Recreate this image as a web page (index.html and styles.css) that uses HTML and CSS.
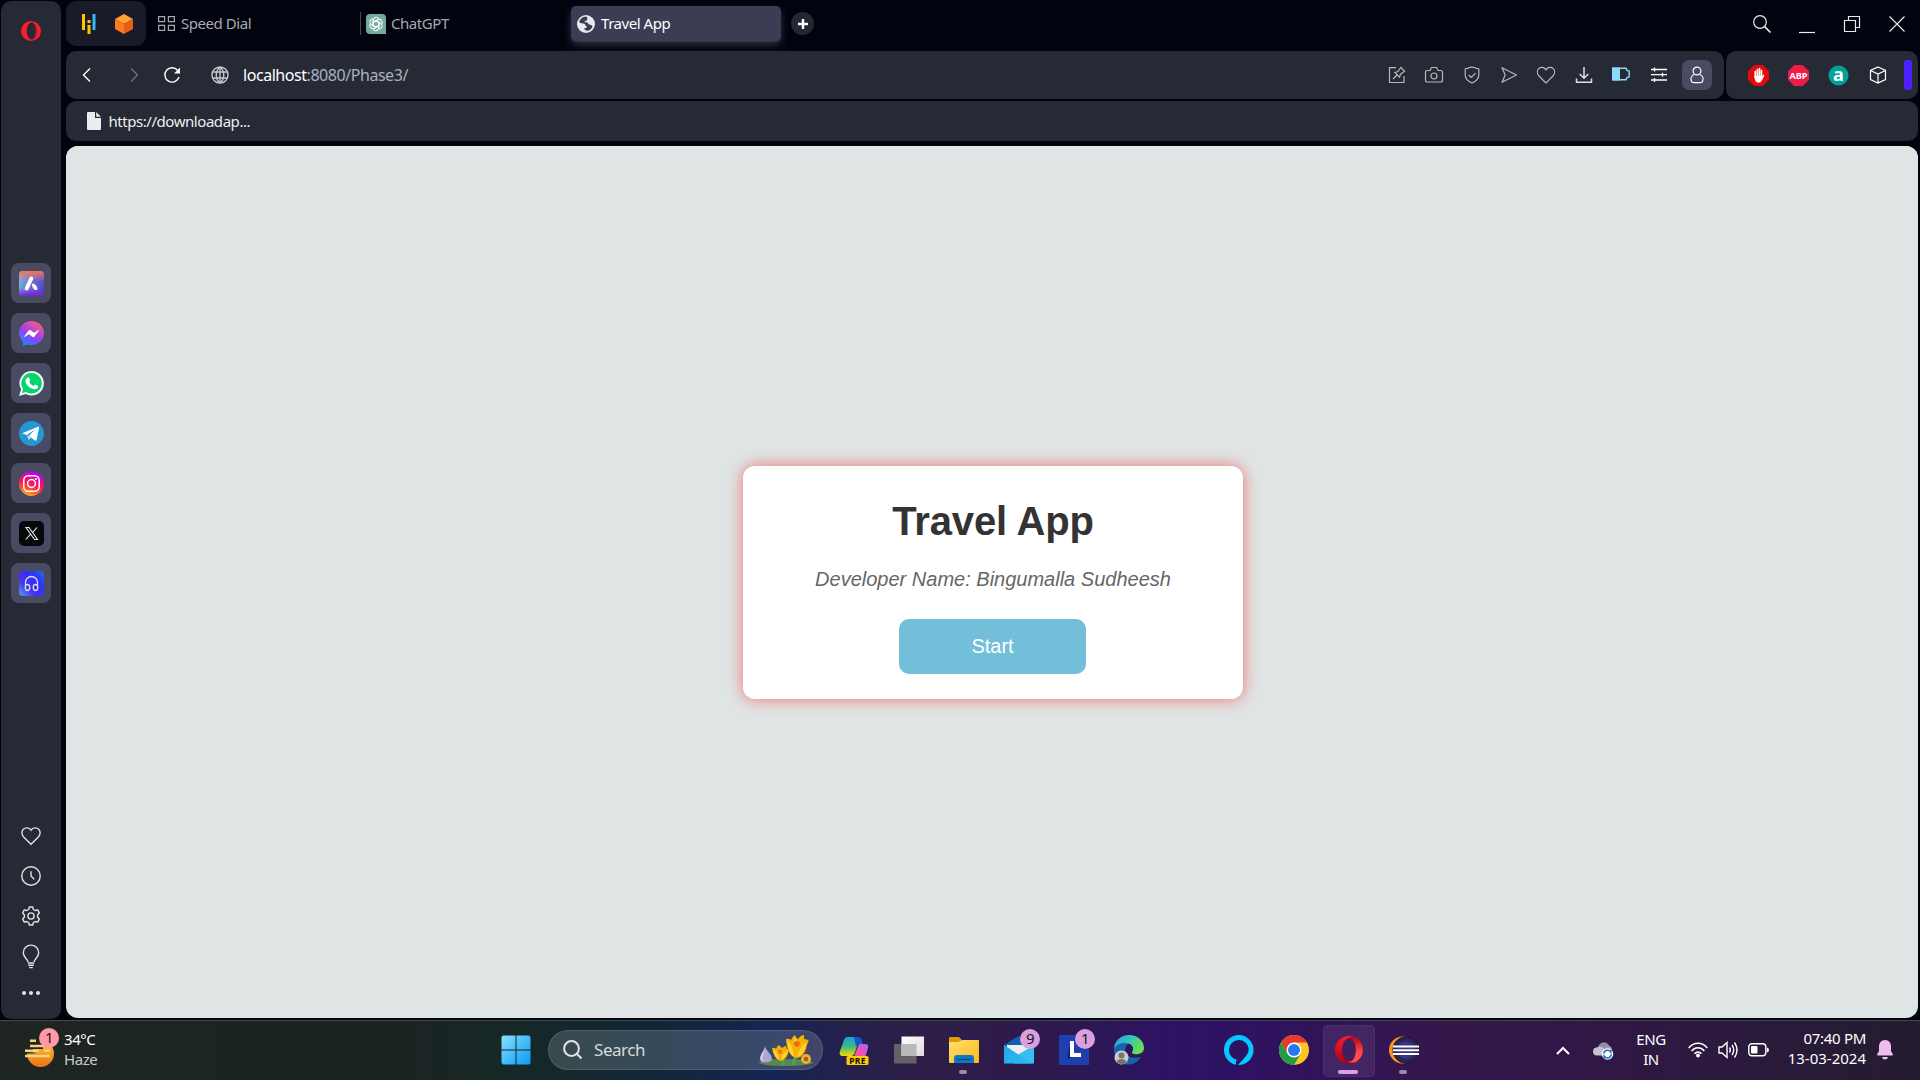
FILE: index.html
```html
<!DOCTYPE html>
<html lang="en">
<head>
<meta charset="utf-8">
<title>Travel App</title>
<link rel="stylesheet" href="styles.css">
</head>
<body>
<div class="browser">
  <nav class="sidebar">
    <svg class="opera-logo" viewBox="0 0 20 20"><path fill="#ff1b2d" fill-rule="evenodd" d="M10 0a10 10 0 1 0 0 20a10 10 0 1 0 0-20zM10.500 1.500c2.800 0 4.300 3.700 4.300 8.500s-1.500 8.500-4.300 8.500S5.700 14.800 5.700 10S7.700 1.500 10.500 1.500z"/><path fill="none" stroke="#8e1a28" stroke-width=".8" d="M11.500 1.300c3 1.700 4.200 5 4.200 8.700s-1.200 7-4.200 8.700"/></svg>
    <div class="apps">
      <span class="app"><svg viewBox="0 0 25 25"><defs><linearGradient id="ar" x1="0" y1="0.300" x2="1" y2="0.700"><stop offset="0" stop-color="#62c8dd"/><stop offset=".4" stop-color="#7771d8"/><stop offset="1" stop-color="#4d49c4"/></linearGradient><linearGradient id="ar2" x1=".4" y1="0" x2=".4" y2="1"><stop offset="0" stop-color="#f5774a"/><stop offset=".45" stop-color="#d8688a" stop-opacity="0"/><stop offset=".7" stop-color="#7624d0" stop-opacity="0"/><stop offset="1" stop-color="#7624d0"/></linearGradient></defs><rect width="25" height="25" rx="4" fill="url(#ar)"/><rect width="25" height="25" rx="4" fill="url(#ar2)"/><path d="M12.300 7.500L7.700 17.500" stroke="#fff" stroke-width="4" stroke-linecap="round"/><path d="M13.500 13c2.500 0 4.500 2.500 4.500 5.500-3 .5-4.500-2-4.500-5.500z" fill="#fff" stroke="#fff"/></svg></span>
      <span class="app"><svg viewBox="0 0 25 25"><defs><linearGradient id="ms" x1=".2" y1="1" x2=".8" y2="0"><stop offset="0" stop-color="#168bff"/><stop offset=".45" stop-color="#9a3df5"/><stop offset="1" stop-color="#ff5f78"/></linearGradient></defs><path fill="url(#ms)" d="M12.500 0C5.500 0 0 5.100 0 12c0 3.600 1.500 6.400 4 8.500V25l4-1.600c1.400.4 2.900.6 4.500.6C19.500 24 25 18.900 25 12S19.500 0 12.500 0z"/><path fill="#fff" d="M4.500 16.500l5-7q1-1 2.200-.2l3.300 2.500 5.500-3.300-5 7q-1 1.200-2.200.3l-3.300-2.500z"/></svg></span>
      <span class="app"><svg viewBox="0 0 25 25"><path fill="#f3f6f6" d="M12.700 0a12.300 12.300 0 0 0-10.600 18.500L0 25l6.700-1.900A12.300 12.300 0 1 0 12.700 0z"/><path fill="#05d36c" d="M12.700 2.100A10.200 10.200 0 0 0 4.100 18l-1.200 4 4.200-1.100A10.200 10.200 0 1 0 12.700 2.100z"/><path fill="#fff" d="M8.500 6.500c.9-.5 1.400-.2 1.700.4l1 2.200c.2.600-.9 1.600-1 1.900.9 1.900 2.300 3.100 4.300 3.900.5 0 1.300-1.600 1.900-1.400l2.400 1.200c.7.400.2 1.900-.4 2.600-1.400 1.300-3.200 1.300-5.700.3-2.900-1.200-5.300-4-6.100-6.400-.5-1.800.2-3.600 1.900-4.700z"/></svg></span>
      <span class="app"><svg viewBox="0 0 25 25"><circle cx="12.500" cy="12.500" r="12.500" fill="#2497d4"/><path fill="#fff" d="M3.200 12.200L19 5.800c.8-.2 1.200.2 1 1.200l-2.500 12c-.2.900-.8 1-1.500.6l-7-5.200z"/><path fill="#2497d4" d="M8 14l8.500-6L10 14.700l-.8 4.500z"/><path fill="#d5e7f2" d="M8.200 14.200l1.300 4.800 2.500-2.500z"/></svg></span>
      <span class="app"><svg viewBox="0 0 25 25"><defs><linearGradient id="ig" x1=".25" y1="1" x2=".6" y2="0"><stop offset="0" stop-color="#ffc42e"/><stop offset=".25" stop-color="#ff5a24"/><stop offset=".5" stop-color="#ff125f"/><stop offset="1" stop-color="#b500fa"/></linearGradient></defs><circle cx="12.500" cy="12.500" r="12.500" fill="url(#ig)"/><rect x="4.800" y="4.800" width="15.400" height="15.400" rx="4.500" fill="none" stroke="#fff" stroke-width="1.500"/><circle cx="12.500" cy="12.500" r="3.900" fill="none" stroke="#fff" stroke-width="1.500"/><circle cx="17" cy="8" r="1" fill="#fff"/></svg></span>
      <span class="app"><svg viewBox="0 0 25 25"><rect width="25" height="25" rx="5" fill="#07080a"/><path fill="none" stroke="#e8e8e8" stroke-width="1.100" d="M7 6.500h3l8.500 12h-3zM18 6.500l-4.800 5.300M11.600 13.200L6.800 18.500"/></svg></span>
      <span class="app"><svg viewBox="0 0 25 25"><defs><linearGradient id="hp" x1="0" y1="1" x2="1" y2="0"><stop offset="0" stop-color="#50a7ef"/><stop offset=".35" stop-color="#4530f0"/><stop offset=".7" stop-color="#3034f0"/><stop offset="1" stop-color="#1b6ef4"/></linearGradient></defs><rect width="25" height="25" rx="4" fill="url(#hp)"/><path fill="none" stroke="#d7dcf5" stroke-width="1.300" d="M6.500 15v-3.500a6 6 0 0 1 12 0V15M8.500 13.500c3 0 3 6 0 6s-3-6 0-6zM16.500 13.500c3 0 3 6 0 6s-3-6 0-6z"/></svg></span>
    </div>
    <div class="side-tools line">
      <svg viewBox="0 0 20 20"><path d="M10 18.300L2.600 11C.2 8.400.6 5 2.300 3.300c2.200-2.200 5.900-1.900 7.700.9 1.800-2.800 5.500-3.100 7.700-.9 1.700 1.700 2.100 5.100-.3 7.700z"/></svg>
      <svg viewBox="0 0 20 20"><circle cx="10" cy="10" r="9.200"/><path d="M10 5.300V10l3.200 3.300"/></svg>
      <svg viewBox="0 0 20 20"><path d="M8.300 1h3.400l.7 2.500 1.800 1 2.500-.7 1.700 3L16.600 9v2l1.800 2.200-1.700 3-2.500-.7-1.800 1-.7 2.500H8.300l-.7-2.500-1.800-1-2.500.7-1.700-3L3.400 11V9L1.600 6.800l1.700-3 2.500.7 1.800-1z" stroke-linejoin="round"/><circle cx="10" cy="10" r="3.100"/></svg>
      <svg class="bulb" viewBox="0 0 20 24"><path d="M7 17c0-3-4.700-4-4.700-9.200a7.700 7.700 0 0 1 15.400 0C17.700 13 13 14 13 17M6.700 18h6.600M7.200 20.300h5.600M8.200 22.600h3.600"/></svg>
      <svg viewBox="0 0 20 20"><path d="M3 10h.01M10 10h.01M17 10h.01" stroke-width="4" stroke-linecap="round"/></svg>
    </div>
  </nav>

  <div class="window">
    <header class="tabs">
      <div class="pinned">
        <svg width="16" height="20" viewBox="0 0 16 20"><path stroke="#ffc400" stroke-width="3" d="M2.500 0v16M8 11v9M8 6v3"/><path stroke="#39b5f7" stroke-width="3" d="M13 0v16"/></svg>
        <svg width="18" height="20" viewBox="0 0 18 20"><path fill="#ffa135" d="M9 0l9 5-9 5-9-5z"/><path fill="#fa7a20" d="M0 5l9 5v10l-9-5z"/><path fill="#ea5d16" d="M18 5l-9 5v10l9-5z"/></svg>
      </div>
      <div class="tab speed">
        <svg class="line" width="17" height="15" viewBox="0 0 17 15"><path stroke="#a8a9af" d="M.6.6h6v5h-6zM10.400.6h6v5h-6zM.6 9.400h6v5h-6zM10.400 9.400h6v5h-6z"/></svg>
        <span>Speed Dial</span>
      </div>
      <div class="tab chat">
        <svg width="20" height="20" viewBox="0 0 20 20"><path d="M4 0h12a4 4 0 0 1 4 4v16H4a4 4 0 0 1-4-4V4a4 4 0 0 1 4-4z" fill="#74aa9c"/><g fill="none" stroke="#eef7f4" stroke-width="1.100"><path id="petal" d="M7.300 11.500V6.200a3 3 0 0 1 5.600-1.400M7.300 8.400l3-1.700 4.400 2.500"/><use href="#petal" transform="rotate(60 10 10)"/><use href="#petal" transform="rotate(120 10 10)"/><use href="#petal" transform="rotate(180 10 10)"/><use href="#petal" transform="rotate(240 10 10)"/><use href="#petal" transform="rotate(300 10 10)"/></g></svg>
        <span>ChatGPT</span>
      </div>
      <div class="tab active">
        <svg width="18" height="18" viewBox="0 0 18 18"><circle cx="9" cy="9" r="9" fill="#e6e9ed"/><path fill="#3a3d54" d="M10 2C6.500 1.300 3 3.500 2.300 7c1.200 1.800 3.700 1.200 5 1.800 1.400.7.700 2 2 2.500 1.500.5.700 1.700-2.300 2.200.5 1.200 2 2.500 4 2.200 2-.4 3.800-2 4.500-4.200-.8-1.400-2-2-3.800-2-.2-1.700-2-2.200-4-2.200-.6-1.300 1-1.500 2-1.500C10 4.300 11 3.500 10 2z"/></svg>
        <span>Travel App</span>
      </div>
      <span class="new-tab"><svg width="10" height="10" viewBox="0 0 10 10"><path stroke="#fff" stroke-width="2.400" d="M5 0v10M0 5h10"/></svg></span>
      <div class="controls line">
        <svg viewBox="0 0 18 18"><circle cx="7" cy="7" r="6.300"/><path stroke-width="1.700" d="M11.500 11.500l6 6"/></svg>
        <svg viewBox="0 0 18 18"><path d="M1 17.500h16"/></svg>
        <svg viewBox="0 0 18 18"><path d="M1.500 5.500h11v11h-11zM5.500 5V1.500h11v11H13"/></svg>
        <svg viewBox="0 0 18 18"><path d="M1.500 1.500l15 15M16.500 1.500l-15 15"/></svg>
      </div>
    </header>

    <div class="toolbar">
      <div class="address panel">
        <div class="nav-icons line">
          <svg viewBox="0 0 18 18"><path stroke="#fff" d="M12 2.500L5.500 9l6.500 6.500"/></svg>
          <svg viewBox="0 0 18 18"><path stroke="#6d707a" d="M6 2.500L12.500 9 6 15.500"/></svg>
          <svg class="reload" viewBox="0 0 18 18"><path stroke="#fff" d="M15 4.800A7.200 7.200 0 1 0 16 11"/><path fill="#fff" stroke="none" d="M17 1.500v6h-6z"/></svg>
          <svg class="globe" viewBox="0 0 18 18"><path stroke="#c4c6cc" d="M9 1a8 8 0 1 0 0 16A8 8 0 1 0 9 1zM9 1c-5 4-5 12 0 16M9 1c5 4 5 12 0 16M2 6h14M2 12h14M9 1v16"/></svg>
        </div>
        <span class="url"><b>localhost</b>:8080/Phase3/</span>
        <div class="page-tools line">
          <svg viewBox="0 0 18 18"><path d="M8 1.700H1.500v14.800H16V10M5 13l4-4M7 6.500l4.500 4.700 1-3 4-3-3.600-3.700-3 4z"/></svg>
          <svg viewBox="0 0 18 18"><path d="M5 4.500l1.500-3h5l1.500 3h2.500q2 0 2 2V14q0 2-2 2h-13q-2 0-2-2V6.500q0-2 2-2z"/><circle cx="9" cy="10" r="3"/></svg>
          <svg viewBox="0 0 18 18"><path d="M9 1l6.800 2v6c0 4-3 6.300-6.800 8C5.200 15.300 2.200 13 2.200 9V3zM5.600 8.800L8.300 11.500l4.300-4.400"/></svg>
          <svg viewBox="0 0 18 18"><path stroke-linejoin="round" d="M2 1.700L16.500 9 2 16.300 5.200 9z"/></svg>
          <svg viewBox="0 0 18 18"><path d="M9 17L2 10C-.5 7.200.2 4.200 1.700 2.700 3.700.7 7.300.9 9 3.900c1.700-3 5.300-3.200 7.300-1.200C17.800 4.200 18.500 7.200 16 10z"/></svg>
          <svg class="bright" viewBox="0 0 18 18"><path stroke-width="1.500" d="M9 1v11M4.700 8L9 12.300 13.300 8M1.500 12.500v3.700h15v-3.700"/></svg>
          <svg viewBox="0 0 18 18"><path fill="#8edaff" stroke="none" d="M0 1.500h8v13H1q-1 0-1-1z"/><path stroke="#8edaff" stroke-width="1.400" d="M1 2.200h13l1 2.200 2.200.8v5.600l-2.200.8-1 2.200H1z"/></svg>
          <svg class="bright" viewBox="0 0 18 18"><path stroke="#fff" stroke-width="1.300" d="M1 3.500h16M1 8.700h16M1 14h16M4.500 1.500v4M12.500 6.700v4M4.500 12v4"/></svg>
          <span class="profile"><svg viewBox="0 0 18 18"><circle cx="9" cy="5" r="3.900" stroke="#fff"/><path stroke="#fff" d="M6 8.500C3 10 2.500 13 3.300 15q.6 1.700 2.500 1.700h6.400q1.900 0 2.500-1.700c.8-2 .3-5-2.700-6.500"/></svg></span>
        </div>
      </div>
      <div class="extensions panel">
        <span><svg width="21" height="21" viewBox="0 0 21 21"><path fill="#e60a0a" d="M6.200 0h8.600L21 6.200v8.600L14.800 21H6.200L0 14.800V6.200z"/><path stroke="#fff" stroke-width="1.700" stroke-linecap="round" d="M7.300 6.500v6M9.400 4.500v7M11.500 3.700v7M13.500 5.500V12"/><path fill="#fff" d="M6.500 11h7.700l1.400-1.500c.8.200.8.900.5 1.500l-2.200 4.500-1.600 2H9c-2-1.500-2.500-3-2.500-6.500z"/></svg></span>
        <span><svg width="21" height="21" viewBox="0 0 21 21"><path fill="#ed1e45" d="M6.200 0h8.600L21 6.200v8.600L14.800 21H6.200L0 14.800V6.200z"/><text class="abp" x="10.500" y="14" text-anchor="middle" textLength="18" lengthAdjust="spacingAndGlyphs">ABP</text></svg></span>
        <span><svg width="21" height="21" viewBox="0 0 21 21"><circle cx="10.500" cy="10.500" r="10" fill="#00a497"/><text class="letter-a" x="10.500" y="16" text-anchor="middle">a</text></svg></span>
        <span class="line"><svg width="18" height="18" viewBox="0 0 18 18"><path stroke="#fff" d="M9 1l7.500 3.500v9L9 17l-7.500-3.500v-9zM1.500 4.500L9 8l7.500-3.500M9 8v9"/></svg></span>
        <i class="accent"></i>
      </div>
    </div>

    <div class="bookmarks panel">
      <svg width="14" height="18" viewBox="0 0 14 18"><path fill="#e9edf2" d="M1 0h7v6h6v11q0 1-1 1H1q-1 0-1-1V1q0-1 1-1zM9.200 0L14 4.800H9.200z"/></svg>
      <span>https://downloadap...</span>
    </div>

    <main class="page">
      <section class="card">
        <h1>Travel App</h1>
        <p>Developer Name: Bingumalla Sudheesh</p>
        <button>Start</button>
      </section>
    </main>
  </div>
</div>

<footer class="taskbar">
  <div class="weather">
    <div class="haze">
      <svg width="30" height="32" viewBox="0 0 30 32"><defs><linearGradient id="sun" x1="0" y1="0" x2="0" y2="1"><stop offset="0" stop-color="#ffc72e"/><stop offset="1" stop-color="#f0701a"/></linearGradient></defs><path fill="url(#sun)" d="M2 14.500a13.500 13.500 0 0 0 27 0C29 8 24 2 18 1v9H8v4.500z"/><path stroke="#f3d27b" stroke-width="2.600" d="M5 1.800h6M5 7h15M0 11.800h14M19 11.800h6M0 17h25"/><path stroke="#8a7433" stroke-width="1.500" d="M4 14.300h7"/></svg>
      <span class="badge alert">1</span>
    </div>
    <div class="lines"><span>34°C</span><span class="dim">Haze</span></div>
  </div>

  <div class="dock">
    <span class="slot"><svg width="30" height="30" viewBox="0 0 30 30"><defs><linearGradient id="win" x1="0" y1="0" x2="1" y2="1"><stop offset="0" stop-color="#8be1ff"/><stop offset=".5" stop-color="#44bdf9"/><stop offset="1" stop-color="#0b9bf8"/></linearGradient></defs><path fill="url(#win)" d="M2 .5h12.500v14H.5V2zM15.500.5H28l1.500 1.500v12.500h-14zM.5 15.500h14v14H2L.5 28zM15.500 15.500h14V28L28 29.500H15.500z"/></svg></span>
    <div class="search">
      <svg width="20" height="20" viewBox="0 0 20 20" fill="none" stroke="#e1e5e6" stroke-width="2"><circle cx="8.500" cy="8.500" r="7.400"/><path d="M13.500 13.500l5 5"/></svg>
      <span>Search</span>
      <svg class="flowers" width="56" height="32" viewBox="0 0 56 32"><ellipse cx="28" cy="28.500" rx="27" ry="3.500" fill="#5a8651"/><path stroke="#43a55c" stroke-width="3" fill="none" d="M39 20q-3 6-4 11M22 22q4 4 3 9"/><path fill="#b0a6ce" d="M7 12c1 5 7 8 7 13 0 4-12 5-12 0 0-4 4-8 5-13z"/><path fill="#dcd5ea" d="M7 15c-1 4-4 8-2 13-4-2-3-7 2-13z"/><path fill="#f5b000" d="M28 5q3-1 5 1 1-3 4-5 1 3 3 4 3-4 6-4v4q3 0 5 2-2 2-3 8-3 9-10 9-7-2-9-12-1-4-1-7z"/><path fill="#ffd02f" d="M29 6q6 4 7 17-5-3-6-10zM49 8q-7 3-10 15 6-2 8-9zM37 3q3 4 0 10-2-5 0-10z"/><path fill="#ee6719" d="M36 8l3-1 3 1-1 4-3 1-2-2z"/><path fill="#f5b000" d="M14 14q3-1 4 1 1-3 3-4l3 3q2-2 4-2l1 3h2q-1 10-8 12-7-1-9-13z"/><path fill="#ffd33b" d="M15 15q5 3 6 11-5-3-6-11zM30 16q-5 2-7 10 5-2 7-10z"/><path fill="#e96a16" d="M20 16h4l-1 4h-2z"/><circle cx="48" cy="25" r="5" fill="#f4ae2f"/><circle cx="48" cy="25" r="2.200" fill="#9c5b19"/></svg>
    </div>
    <span class="slot"><svg width="30" height="30" viewBox="0 0 30 30"><defs><linearGradient id="cp" x1="0" y1="0" x2="0" y2="1"><stop offset="0" stop-color="#189fe8"/><stop offset=".5" stop-color="#42b97c"/><stop offset="1" stop-color="#f5d90a"/></linearGradient><linearGradient id="cp2" x1="0" y1="1" x2="1" y2="0"><stop offset="0" stop-color="#ff5c4c"/><stop offset=".5" stop-color="#ed52b7"/><stop offset="1" stop-color="#9e63ff"/></linearGradient></defs><path fill="url(#cp)" d="M8 2h10q3 0 2 4l-4 11q-1 4-4 4H4c-3 0-4-2-3-5L5 5q1-3 3-3z"/><path fill="#1254d0" d="M15 2h4q3 0 4 4l1 3h-4q-2 0-3 3z"/><path fill="url(#cp2)" d="M20 9h6q4 0 3 4l-3 10H12q3 0 4-4z"/><rect x="7.500" y="21" width="22" height="9" rx="1.500" fill="#ffca0a"/><text class="pre" x="18.500" y="28.500" text-anchor="middle">PRE</text></svg></span>
    <span class="slot"><svg width="30" height="30" viewBox="0 0 30 30"><defs><linearGradient id="tv" x1="0" y1="0" x2="1" y2="1"><stop offset="0" stop-color="#fff"/><stop offset="1" stop-color="#dcdcdc"/></linearGradient></defs><path fill="#636166" d="M0 9h22.500v19.500H0z"/><path fill="url(#tv)" d="M7.500 1.500H30V21H7.500z"/><path fill="#b9b8bb" d="M7.500 9h15v12h-15z"/></svg></span>
    <span class="slot running"><svg width="30" height="30" viewBox="0 0 30 30"><defs><linearGradient id="fo" x1="0" y1="0" x2="1" y2="1"><stop offset="0" stop-color="#ffdf75"/><stop offset="1" stop-color="#fdb913"/></linearGradient></defs><path fill="#dc9c05" d="M0 3q0-1 1-1h9l3 3h-1v4H0z"/><path fill="url(#fo)" d="M0 7h9l4-2h16q1 0 1 1v21q0 1-1 1H1q-1 0-1-1z"/><path fill="#0c78c9" d="M5 28v-5q0-3 3-3h14q3 0 3 3v5z"/><path stroke="#0a4b7d" stroke-width="1.500" d="M8 24.500h14"/></svg></span>
    <span class="slot"><svg width="30" height="30" viewBox="0 0 30 30"><defs><linearGradient id="ml" x1="0" y1="0" x2="1" y2="1"><stop offset="0" stop-color="#24a5ea"/><stop offset="1" stop-color="#2bbef2"/></linearGradient></defs><path fill="#0e62ad" d="M0 10L15 1l15 9v4H0z"/><path fill="#eee" d="M3 10h24v5L15 21 3 15z"/><path fill="#36bff0" d="M15 19L30 10v18.500H10z"/><path fill="url(#ml)" d="M0 10l28 18.500H0z"/></svg><span class="badge">9</span></span>
    <span class="slot"><svg width="30" height="30" viewBox="0 0 30 30"><path fill="#1e40af" d="M0 0h30v30H0z"/><path fill="#0b205f" d="M11 8L8.500 24 13 22z"/><path fill="#fff" d="M11 6h4v12h7v4H11z"/></svg><span class="badge">1</span></span>
    <span class="slot"><svg width="30" height="30" viewBox="0 0 30 30"><defs><linearGradient id="eg" x1="0" y1="0" x2="1" y2=".4"><stop offset="0" stop-color="#2696dc"/><stop offset=".5" stop-color="#31c3c1"/><stop offset="1" stop-color="#68df51"/></linearGradient></defs><path fill="#1464ae" d="M0 14c2-6 9-8 15-6-4 3-5 8-2 12 3 3 8 3 14 2-5 8-13 9-19 6S0 20 0 14z"/><path fill="url(#eg)" d="M0 14C0 6 7 0 15 0c9 0 15 6 15 13 0 5-5 7-10 6-3-.5-2-2-1-4 1-4-3-7-8-7S2 10 0 14z"/><circle cx="7.500" cy="22.500" r="7" fill="#cbcacb"/><circle cx="7.500" cy="20.500" r="3" fill="#77736f"/><path fill="#77736f" d="M2.500 27c1-4 9-4 10 0-2 3-8 3-10 0z"/></svg></span>
    <span class="slot"></span>
    <span class="slot"><svg width="30" height="30" viewBox="0 0 30 30"><path fill="#00caff" fill-rule="evenodd" d="M15 0a15 15 0 0 0-3 29.700v-3.500c0-1.200 1-1.200 2-1.200A10 10 0 1 1 24.800 13.500c0 6-4 8.500-10.800 16.500A15 15 0 1 0 15 0z"/></svg></span>
    <span class="slot"><svg width="30" height="30" viewBox="0 0 30 30"><circle cx="15" cy="15" r="15" fill="#ffc51f"/><path fill="#e33b2e" d="M2 7.500a15 15 0 0 1 26 0H15l-6.500 11z"/><path fill="#249a46" d="M2 7.500a15 15 0 0 0 13 22.500l6.500-11H9z"/><circle cx="15" cy="15" r="7.500" fill="#fff"/><circle cx="15" cy="15" r="6" fill="#2878ed"/></svg></span>
    <span class="slot current running"><svg width="30" height="30" viewBox="0 0 30 30"><defs><linearGradient id="op" x1="0" y1="0" x2="0" y2="1"><stop offset="0" stop-color="#ff1b2d"/><stop offset="1" stop-color="#a70014"/></linearGradient><linearGradient id="op2" x1="0" y1="0" x2="0" y2="1"><stop offset="0" stop-color="#b50014"/><stop offset=".6" stop-color="#ff4b4b"/><stop offset="1" stop-color="#ff4b4b"/></linearGradient></defs><circle cx="15" cy="15" r="14" fill="url(#op)"/><path fill="url(#op2)" d="M13 4C16 1 21 1 24 4.500a14 14 0 0 1 0 21C21 28.500 16 28 13 26z"/><ellipse cx="15" cy="15" rx="7" ry="11.500" fill="#3f205c"/></svg></span>
    <span class="slot running"><svg width="30" height="30" viewBox="0 0 30 30"><circle cx="13.500" cy="15" r="13.500" fill="#f7941e"/><circle cx="17" cy="15" r="13.500" fill="#1e1735"/><circle cx="17" cy="15" r="12.500" fill="#2c2458"/><circle cx="17" cy="15" r="9" fill="#3a3480"/><path stroke="#fff" stroke-width="2" d="M4 11.500h26M4 15.200h26M4 19h26"/></svg></span>
  </div>

  <div class="tray">
    <svg class="chev" width="14" height="9" viewBox="0 0 14 9"><path fill="none" stroke="#fff" stroke-width="2" d="M1 8l6-6 6 6"/></svg>
    <svg class="cloud" width="20" height="18" viewBox="0 0 20 18"><circle cx="11" cy="6" r="5.800" fill="#918c9f"/><circle cx="15" cy="8" r="4" fill="#a39dad"/><path fill="#c7c0cf" d="M4 13.500a4 4 0 0 1 0-8c2-2 6-1 7 1.500v6.500z"/><circle cx="14.500" cy="12" r="5.800" fill="#fff"/><path fill="none" stroke="#1370c4" stroke-width="1.500" d="M10.800 11.500a3.800 3.800 0 0 1 7-1.500V8M18.200 12.700a3.800 3.800 0 0 1-7 1.500v2"/></svg>
    <div class="lines lang"><span>ENG</span><span>IN</span></div>
    <svg class="wifi" width="20" height="16" viewBox="0 0 20 16"><g fill="none" stroke="#fff" stroke-width="1.500"><path d="M.7 6C6-.2 14-.2 19.300 6M3.600 9C7.300 4.700 12.700 4.700 16.400 9M6.500 11.800c2-2.400 5-2.400 7 0"/></g><circle cx="10" cy="13.500" r="1.900" fill="#fff"/></svg>
    <svg class="vol" width="20" height="18" viewBox="0 0 20 18"><path fill="none" stroke="#fff" stroke-width="1.400" d="M1 6h3l5-4.500v15L4 12H1zM11.500 6.500q1.700 2.500 0 5M14 4q3.500 5 0 10M16.500 1.500q5 7.500 0 15"/></svg>
    <svg class="bat" width="21" height="14" viewBox="0 0 21 14"><rect x=".8" y=".8" width="17" height="12" rx="3" fill="none" stroke="#fff" stroke-width="1.400"/><rect x="3" y="3" width="6.500" height="7.600" rx="1" fill="#fff"/><path fill="#fff" d="M19 4.500q2 .5 2 2.500t-2 2.500z"/></svg>
    <div class="lines clock"><span>07:40 PM</span><span class="date">13-03-2024</span></div>
    <svg width="16" height="20" viewBox="0 0 16 20"><path fill="#efbdf0" d="M8 0c4 0 6 3 6 6.500V11l2 3.500q0 1-1 1H1q-1 0-1-1L2 11V6.500C2 3 4 0 8 0zM5 17h6q-.5 2.500-3 2.500T5 17z"/></svg>
  </div>
</footer>
</body>
</html>
```

FILE: styles.css
```css
* { box-sizing: border-box; }

body {
  margin: 0;
  width: 1920px;
  height: 1080px;
  overflow: hidden;
  display: flex;
  flex-direction: column;
  background: #01030f;
  color: #fff;
  font: 15px/20px "Noto Sans", sans-serif;
  letter-spacing: -0.45px;
}

svg { display: block; flex: none; overflow: visible; }
.line svg, svg.line { fill: none; stroke: #c9cbd0; stroke-width: 1.2; }
.panel { background: #262a35; border-radius: 10px; }

.browser {
  height: 1020px;
  display: flex;
  gap: 5px;
  padding: 1px 2px 2px 1px;
}

/* Sidebar */
.sidebar {
  width: 60px;
  height: 1018px;
  background: #262a35;
  border-radius: 10px;
  display: flex;
  flex-direction: column;
  align-items: center;
  padding-top: 20px;
}
.opera-logo { width: 20px; height: 20px; }
.apps { display: flex; flex-direction: column; gap: 10px; margin-top: 222px; }
.app {
  width: 40px;
  height: 40px;
  border-radius: 8px;
  background: #484b61;
  display: grid;
  place-items: center;
}
.app svg { width: 25px; height: 25px; }
.side-tools {
  margin: 223px 1px 0 0;
  display: flex;
  flex-direction: column;
  gap: 20px;
}
.side-tools svg { width: 20px; height: 20px; stroke: #dfe2e6; stroke-width: 1.4; }
.side-tools .bulb { height: 24px; margin: -1px 0 -6px; }

.window { flex: 1; display: flex; flex-direction: column; }

/* Tab strip */
.tabs { height: 50px; display: flex; align-items: flex-start; }
.pinned {
  width: 80px;
  height: 45px;
  border-radius: 10px;
  background: #191c28;
  display: flex;
  align-items: center;
  gap: 18px;
  padding-left: 15px;
}
.tab { display: flex; align-items: center; height: 35px; margin-top: 5px; color: #a8a9af; }
.tab span { margin-top: -1px; }
.speed { width: 214px; padding-left: 12px; gap: 6px; }
.chat {
  width: 211px;
  height: 23px;
  margin-top: 11px;
  padding-left: 5px;
  gap: 5px;
  border-left: 1px solid #454854;
}
.active {
  width: 210px;
  padding-left: 6px;
  gap: 6px;
  color: #fff;
  background: #3a3d54;
  border-radius: 5px;
  box-shadow: 0 4px 9px rgba(130, 135, 155, 0.35), 0 1px 0 #171924;
}
.new-tab {
  width: 23px;
  height: 23px;
  margin: 11px 0 0 10px;
  border-radius: 50%;
  background: #242731;
  display: grid;
  place-items: center;
}
.controls { display: flex; gap: 27px; margin: 14px 12px 0 auto; }
.controls svg { width: 18px; height: 18px; stroke: #e9eaee; }

/* Address bar */
.toolbar { height: 48px; display: flex; gap: 2px; }
.address { width: 1658px; display: flex; align-items: center; padding: 0 12px 0 12px; }
.nav-icons { display: flex; align-items: center; }
.nav-icons svg { width: 18px; height: 18px; stroke-width: 1.4; }
.nav-icons svg + svg { margin-left: 29px; }
.nav-icons .reload { margin-left: 20px; }
.nav-icons .globe { margin-left: 30px; }
.url { margin-left: 14px; font-size: 16px; color: #aab2c0; }
.url b { font-weight: 400; color: #fff; }
.page-tools { display: flex; align-items: center; margin-left: auto; gap: 19.4px; }
.page-tools svg { width: 18px; height: 18px; stroke: #b6b8be; }
.page-tools .bright { stroke: #dfe0e4; }
.profile {
  width: 30px;
  height: 30px;
  margin-left: -5px;
  border-radius: 7px;
  background: #484b61;
  display: grid;
  place-items: center;
}
.extensions { width: 192px; display: flex; align-items: center; padding-left: 12px; }
.extensions span { width: 40px; display: grid; place-items: center; }
.accent { width: 8px; height: 30px; border-radius: 3px; background: #4d20ff; margin-left: 6px; }
.abp { font: 700 9.500px "Noto Sans", sans-serif; fill: #fff; letter-spacing: 0; }
.letter-a { font: 700 18px "Noto Sans", sans-serif; fill: #fff; letter-spacing: 0; }

.bookmarks {
  height: 40px;
  margin-top: 2px;
  display: flex;
  align-items: center;
  gap: 7.500px;
  padding-left: 21px;
  color: #eceef1;
}

/* Page */
.page {
  height: 872px;
  margin-top: 5px;
  border-radius: 12px;
  background: #dfe5e4;
  box-shadow: inset 0 3px 3px -1px #e5e5e5;
  display: grid;
  place-items: center;
  font-family: "Liberation Sans", Arial, sans-serif;
  letter-spacing: 0;
}
.card {
  width: 500px;
  height: 233px;
  margin-left: 2px;
  padding-top: 32px;
  border-radius: 12px;
  background: #fff;
  box-shadow: 0 0 16px rgba(255, 0, 0, 0.5);
  text-align: center;
}
.card h1 { margin: 0; font-size: 40px; line-height: 46px; letter-spacing: -0.15px; color: #333; }
.card p { margin: 24px 0 28px; font-size: 20px; line-height: 23px; font-style: italic; color: #666; }
.card button {
  width: 187px;
  height: 55px;
  margin-right: 1px;
  border: 0;
  border-radius: 10px;
  background: #73bfda;
  color: #fff;
  font: 20px "Liberation Sans", Arial, sans-serif;
}

/* Taskbar */
.taskbar {
  height: 60px;
  border-top: 1px solid #44484d;
  display: flex;
  align-items: center;
  background: linear-gradient(90deg, #1e2523 0, #1b2423 400px, #152827 520px, #10273a 660px, #132652 770px, #24204a 850px, #2e1d48 930px, #2d184f 1070px, #2d1265 1170px, #30125d 1300px, #35164c 1430px, #311748 1560px, #2a1a3c 1750px, #241c30 1920px);
}
.lines { display: flex; flex-direction: column; margin-top: -2px; }
.dim { color: #c9cccc; }
.badge {
  position: absolute;
  top: -6px;
  right: -6px;
  width: 20px;
  height: 20px;
  border-radius: 50%;
  background: #d99fe0;
  color: #1b1420;
  text-align: center;
  line-height: 19px;
}
.badge.alert { background: #ff99a5; top: -3px; right: -4px; }
.weather { width: 488px; display: flex; gap: 9px; padding-left: 25px; }
.haze { position: relative; width: 30px; padding-top: 8px; }
.dock { display: flex; align-items: center; height: 60px; margin-top: -1px; }
.slot { position: relative; width: 55px; height: 60px; display: grid; place-items: center; }
.slot .badge { top: 9px; right: 6px; }
.running::after {
  content: "";
  position: absolute;
  left: 23px;
  top: 50px;
  width: 8px;
  height: 4px;
  border-radius: 2px;
  background: #9b8eab;
}
.current::before {
  content: "";
  position: absolute;
  left: 2px;
  top: 5px;
  width: 50px;
  height: 50px;
  border-radius: 5px;
  background: rgba(255, 255, 255, 0.08);
  border: 1px solid rgba(255, 255, 255, 0.06);
}
.current svg { position: relative; }
.current::after { left: 17px; width: 20px; background: #dca0e3; }
.search {
  width: 275px;
  height: 40px;
  margin: 0 3px 0 5px;
  padding: 0 8px 0 14px;
  display: flex;
  align-items: center;
  border-radius: 20px;
  border: 1px solid rgba(255, 255, 255, 0.12);
  background: rgba(255, 255, 255, 0.16);
  color: #d5dadc;
  font-size: 17px;
}
.search span { margin-left: 11px; }
.flowers { margin-left: auto; }
.pre { font: 700 8.500px "Noto Sans", sans-serif; fill: #111; letter-spacing: 0.3px; }

.tray { margin: -1px 0 0 auto; padding-right: 27px; display: flex; align-items: center; }
.cloud { margin: 2px 0 0 23px; }
.lang { width: 44px; margin: -2px 15px 0 16px; align-items: center; }
.vol { margin: 0 10px; }
.clock { width: 97px; align-items: flex-end; margin-top: -4px; margin-right: 11px; letter-spacing: -0.3px; }
.date { letter-spacing: 0; }
```
